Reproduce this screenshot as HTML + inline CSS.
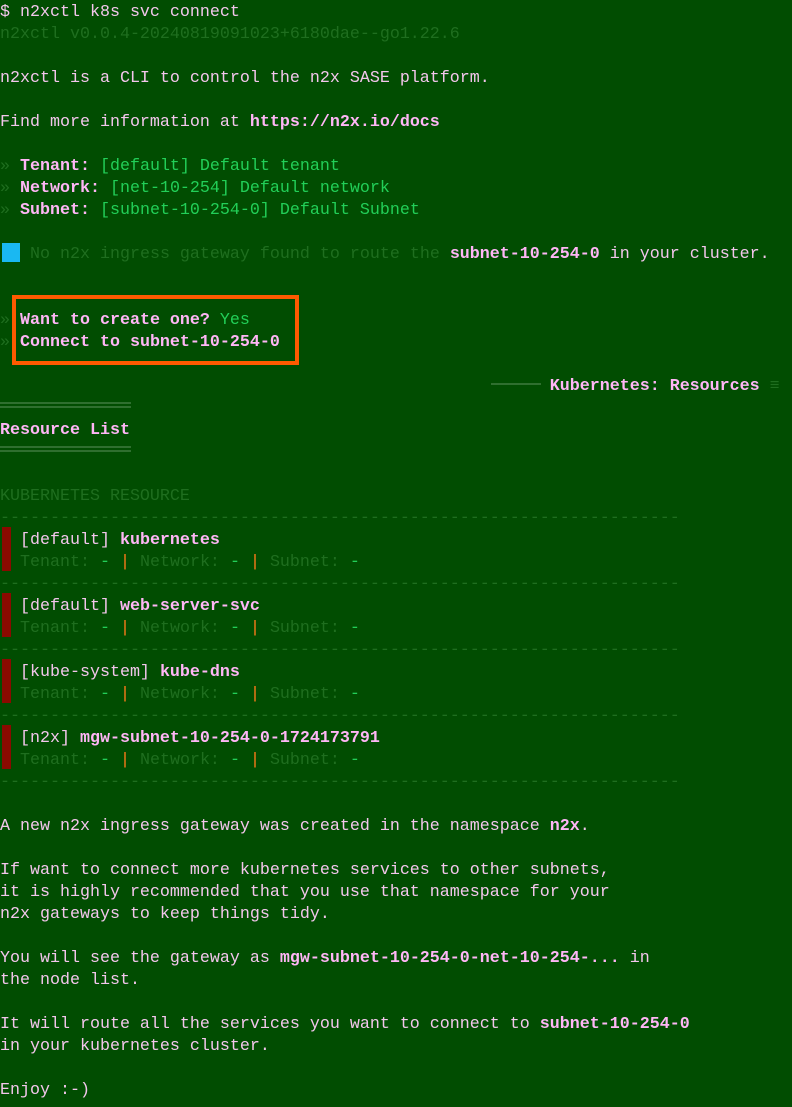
<!DOCTYPE html>
<html><head><meta charset="utf-8"><style>
html,body{margin:0;padding:0;background:#014d01;width:792px;height:1107px;overflow:hidden}
pre{margin:0;padding-top:2px;font-family:"Liberation Mono",monospace;font-size:16.67px;line-height:22px;color:#f3c6ec;white-space:pre;position:relative}
.d{color:#1f6e1f}.b{font-weight:bold;color:#ffb6f6}.g{color:#22cf58}.o{color:#ff7a1a}
.box{position:absolute;left:12px;top:295px;width:279px;height:62px;border:4px solid #ff5a00}
.bar{position:absolute;left:2px;width:9px;height:44px;background:#8a0a00}
.dbl{position:absolute;left:0;width:131px;border-top:2px solid #2f6f2f;border-bottom:2px solid #2f6f2f;box-sizing:content-box;height:2px}
.sq{position:absolute;left:2px;top:243px;width:18px;height:19px;background:#1ab8f2}
.rule{position:absolute;left:491px;top:383px;width:50px;height:2px;background:#2f6f2f}
</style></head><body><pre><span class="box"></span><span class="sq"></span><span class="rule"></span><span class="dbl" style="top:402px"></span><span class="dbl" style="top:446px"></span><span class="bar" style="top:527px"></span><span class="bar" style="top:593px"></span><span class="bar" style="top:659px"></span><span class="bar" style="top:725px"></span>$ n2xctl k8s svc connect
<span class="d">n2xctl v0.0.4-20240819091023+6180dae--go1.22.6</span>

n2xctl is a CLI to control the n2x SASE platform.

Find more information at <span class="b">https://n2x.io/docs</span>

<span class="d">»</span> <span class="b">Tenant:</span> <span class="g">[default] Default tenant</span>
<span class="d">»</span> <span class="b">Network:</span> <span class="g">[net-10-254] Default network</span>
<span class="d">»</span> <span class="b">Subnet:</span> <span class="g">[subnet-10-254-0] Default Subnet</span>

   <span class="d">No n2x ingress gateway found to route the</span> <span class="b">subnet-10-254-0</span> in your cluster.


<span class="d">»</span> <span class="b">Want to create one?</span> <span class="g">Yes</span>
<span class="d">»</span> <span class="b">Connect to subnet-10-254-0</span>

                                                       <span class="b">Kubernetes: Resources</span> <span class="d">≡</span>

<span class="b">Resource List</span>


<span class="d">KUBERNETES RESOURCE</span>
<span class="d">--------------------------------------------------------------------</span>
  [default] <span class="b">kubernetes</span>
  <span class="d">Tenant:</span> <span class="g">-</span> <span class="o">|</span> <span class="d">Network:</span> <span class="g">-</span> <span class="o">|</span> <span class="d">Subnet:</span> <span class="g">-</span>
<span class="d">--------------------------------------------------------------------</span>
  [default] <span class="b">web-server-svc</span>
  <span class="d">Tenant:</span> <span class="g">-</span> <span class="o">|</span> <span class="d">Network:</span> <span class="g">-</span> <span class="o">|</span> <span class="d">Subnet:</span> <span class="g">-</span>
<span class="d">--------------------------------------------------------------------</span>
  [kube-system] <span class="b">kube-dns</span>
  <span class="d">Tenant:</span> <span class="g">-</span> <span class="o">|</span> <span class="d">Network:</span> <span class="g">-</span> <span class="o">|</span> <span class="d">Subnet:</span> <span class="g">-</span>
<span class="d">--------------------------------------------------------------------</span>
  [n2x] <span class="b">mgw-subnet-10-254-0-1724173791</span>
  <span class="d">Tenant:</span> <span class="g">-</span> <span class="o">|</span> <span class="d">Network:</span> <span class="g">-</span> <span class="o">|</span> <span class="d">Subnet:</span> <span class="g">-</span>
<span class="d">--------------------------------------------------------------------</span>

A new n2x ingress gateway was created in the namespace <span class="b">n2x</span>.

If want to connect more kubernetes services to other subnets,
it is highly recommended that you use that namespace for your
n2x gateways to keep things tidy.

You will see the gateway as <span class="b">mgw-subnet-10-254-0-net-10-254-...</span> in
the node list.

It will route all the services you want to connect to <span class="b">subnet-10-254-0</span>
in your kubernetes cluster.

Enjoy :-)
</pre></body></html>
